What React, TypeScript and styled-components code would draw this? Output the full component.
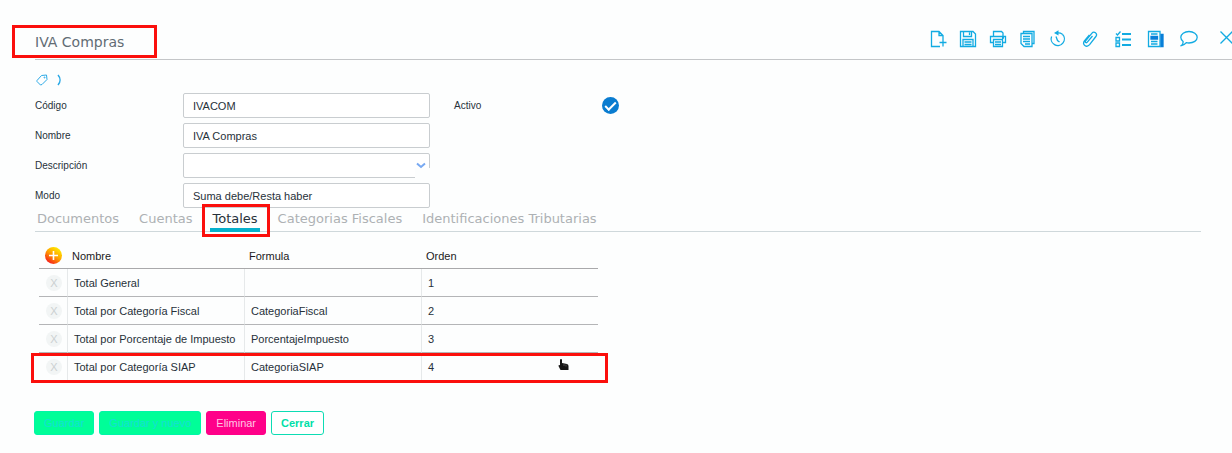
import React, { useState } from "react";
import styled, { createGlobalStyle, css } from "styled-components";

const GlobalStyle = createGlobalStyle`
  *, *::before, *::after { box-sizing: border-box; }
  body {
    margin: 0;
    overflow-x: hidden;
    background: #fdfefe;
    color: #27313a;
    font-family: "Liberation Sans", Arial, sans-serif;
    font-size: 11px;
    line-height: 16px;
  }
  button, input, select { font: inherit; color: inherit; margin: 0; }
  button { cursor: pointer; }
`;

const frame = css`
  position: absolute;
  border: 3px solid #fb0f0c;
  pointer-events: none;
`;

const Header = styled.header`
  display: flex;
  align-items: flex-end;
  justify-content: space-between;
  height: 60px;
  margin-left: 35px;
  border-bottom: 1px solid #c4c6c8;
`;

const Title = styled.h1`
  position: relative;
  margin: 0 0 7px;
  font: 400 14px/20px "DejaVu Sans", sans-serif;
  color: #626c74;
  &::after {
    content: "";
    ${frame}
    inset: -7px -33px -6px -23px;
  }
`;

const Toolbar = styled.nav`
  display: flex;
  align-items: center;
  gap: 14px;
  margin-bottom: 11px;
`;

const ToolGroup = styled.div<{ $gap: number }>`
  display: flex;
  gap: ${(p) => p.$gap}px;
`;

const ToolButton = styled.button`
  display: block;
  padding: 0;
  border: 0;
  background: none;
  color: #12abe2;
  svg { display: block; fill: none; stroke: currentColor; stroke-width: 1.3; }
`;

const CloseButton = styled(ToolButton)`
  margin: 0 0 4px 8px;
`;

const Main = styled.main`
  padding: 0 31px 18px 35px;
`;

const Crumbs = styled.div`
  display: flex;
  align-items: center;
  gap: 9px;
  height: 33px;
  padding: 6px 0 0 1px;
  color: #2aa9e6;
  svg { display: block; fill: none; stroke: currentColor; }
`;

const Form = styled.form`
  display: grid;
  grid-template-columns: minmax(0, 395px) 1fr;
  column-gap: 24px;
`;

const Fields = styled.div`
  display: grid;
  gap: 5px;
  align-content: start;
`;

const Field = styled.div`
  display: grid;
  grid-template-columns: 148px minmax(0, 1fr);
  align-items: center;
  height: 25px;
`;

const Label = styled.label`
  font-size: 10px;
`;

const control = css`
  width: 100%;
  height: 25px;
  padding: 0 9px;
  border: 1px solid #c9cdd0;
  border-radius: 2px;
  background: #fff;
  outline: none;
`;

const TextInput = styled.input`${control}`;

const SelectBox = styled.div`
  position: relative;
`;

const Select = styled.select`
  ${control}
  display: block;
  appearance: none;
`;

const Arrow = styled.span`
  position: absolute;
  right: 0;
  bottom: 0;
  width: 15px;
  height: 10px;
  background: #fdfefe;
  pointer-events: none;
  svg {
    position: absolute;
    left: 1px;
    bottom: 9px;
    fill: none;
    stroke: #78a9f2;
    stroke-width: 2;
  }
`;

const Check = styled.input`
  appearance: none;
  display: grid;
  place-items: center;
  width: 17px;
  height: 17px;
  border-radius: 50%;
  background: #dfe3e6;
  &:checked { background: #0a7cd0; }
  &:checked::after {
    content: "";
    width: 11px;
    height: 6px;
    border: solid #fff;
    border-width: 0 0 2px 2px;
    transform: translateY(-1px) rotate(-45deg);
  }
`;

const Tabs = styled.div`
  display: flex;
  gap: 16px;
  height: 24px;
  border-bottom: 1px solid #cfd8db;
`;

const Tab = styled.button<{ $active: boolean }>`
  height: 24px;
  padding: 0 2px 2px;
  border: 0;
  background: none;
  font: 400 13px/20px "DejaVu Sans", sans-serif;
  color: #adb1b4;
  white-space: nowrap;
  ${(p) => p.$active && css`
    position: relative;
    color: #27313a;
    box-shadow: inset 0 -4px #06b0cc;
    &::after {
      content: "";
      ${frame}
      inset: -4px -10px -5px -8px;
    }
  `}
`;

const TableArea = styled.div`
  position: relative;
  max-width: 559px;
  margin: 11px 0 0 4px;
`;

const Table = styled.table`
  width: 100%;
  border-collapse: separate;
  border-spacing: 0;
  table-layout: fixed;
`;

const HeadCell = styled.th<{ $narrow?: boolean }>`
  width: ${(p) => (p.$narrow ? "28px" : "auto")};
  height: 26px;
  padding: 0 5px;
  border-bottom: 1px solid #a9a9ab;
  font-weight: 400;
  text-align: left;
  color: #1c1a22;
`;

const Row = styled.tr`
  &:last-child > td { border-bottom-color: transparent; }
`;

const Cell = styled.td`
  height: 28px;
  padding: 0 6px;
  border-bottom: 1px solid #b4b5b7;
  & + & { border-left: 1px solid #e6e9ea; }
`;

const RowFrame = styled.div`
  ${frame}
  left: -8px;
  right: -10px;
  bottom: -2px;
  height: 30px;
`;

const AddButton = styled.button`
  display: block;
  width: 17px;
  height: 17px;
  margin-left: 1px;
  padding: 0;
  border: 0;
  border-radius: 50%;
  background: linear-gradient(215deg, #ffe600 15%, #ff9d00 50%, #f5141e 90%);
  svg { display: block; stroke: #fff; stroke-width: 1.6; }
`;

const RemoveButton = styled.button`
  display: block;
  width: 16px;
  height: 16px;
  margin-left: 1px;
  padding: 0;
  border: 0;
  border-radius: 50%;
  background: #f2f5f5;
  color: #cbd0d1;
`;

const Pointer = styled.svg`
  position: absolute;
  right: 29px;
  bottom: 10px;
`;

const Actions = styled.footer`
  display: flex;
  gap: 5px;
  margin: 30px 0 0 -1px;
`;

type Tone = "save" | "danger" | "outline";

const tones = {
  save: css`background: #00fe98; border-color: #00f5a8; color: #14e0d6;`,
  danger: css`background: #ff0089; border-color: #ff0089; color: #ffc4e4;`,
  outline: css`background: #fff; border-color: #0ddcb4; color: #00dfa8; font-weight: 700;`,
};

const ActionButton = styled.button<{ $tone: Tone }>`
  height: 24px;
  padding: 0 9px 1px;
  border: 1px solid;
  border-radius: 3px;
  ${(p) => tones[p.$tone]}
`;

const toolsA = [
  { name: "Nuevo", art: <path d="M11 16.500H2.500v-15h7.500l4 4V10M10 1.500v4h4M10.500 12.500h7M14 9v7.500" /> },
  { name: "Guardar", art: <path d="M1.500 1.500h12.500l2.500 2.500v12.500h-15zM4.500 1.500v5h8v-5M10.500 2.500v2.500M4 16v-6.500h10V16M5.500 12h7M5.500 14.500h7" /> },
  { name: "Imprimir", art: <path d="M4.500 6.500v-5h8l1.500 1.500v3.500M4.500 12.500h-3v-6h15v6h-3M4.500 9.500h9v7h-9zM6 12h6M6 14.500h6M13 8h2" /> },
  { name: "Copiar", art: <path d="M4.500 3.500v-2h10.500v12h-2M2 3.500h11v13H5l-3-3zM4 6.500h7M4 9h7M4 11.500h7M6 14h5" /> },
  { name: "Historial", art: <><path d="M2.600 6.500a6.600 6.600 0 1 0 10.800-2.300M7 6.500l1.500 4 2 1.500" /><path d="M13.400 4.200Q11 2.500 8 3" /><path d="M9.500.3v5.200L5 2.900z" fill="currentColor" stroke="none" /></> },
];

const toolsB = [
  { name: "Adjuntos", art: <path d="M11.500 6l-5.200 6.200c-1 1.200-2.600 0-1.700-1.300l6.200-7.600c2.200-2.700 6.200.4 4.100 3.200L8.600 14.700c-3 3.500-8 0-5.200-3.700l5-6.200" /> },
  { name: "Tareas", art: <><path d="M2 3.500l1.500 1.500L6.500 1.500M2 7.500h3.500V11H2zM2 13h3.500v3.500H2z" /><path d="M8 4h9M8 9.500h9M8 15h9" strokeWidth="1.800" /></> },
  { name: "Noticias", art: <><path d="M1.500 1.500h11.500v15h-11.500zM4 4h6.500M4 11.500h6.500M4 14h6.500" /><path d="M4 6.500h6.500v2.500H4zM14 4.500h2v12h-2z" fill="#087fd8" stroke="#087fd8" /></> },
  { name: "Comentarios", art: <path d="M9 1.500c4.600 0 8.200 2.500 8.200 5.800S13.600 13 9 13c-1 0-1.900-.1-2.700-.3-1.300 1.700-2.800 2.600-4.800 2.800 1.300-1 1.700-2.400 1.600-4C1.700 10.500.8 9 .8 7.300.8 4 4.400 1.500 9 1.500z" /> },
];

const tabNames = ["Documentos", "Cuentas", "Totales", "Categorias Fiscales", "Identificaciones Tributarias"];

const totals = [
  { name: "Total General", formula: "", order: 1 },
  { name: "Total por Categoría Fiscal", formula: "CategoriaFiscal", order: 2 },
  { name: "Total por Porcentaje de Impuesto", formula: "PorcentajeImpuesto", order: 3 },
  { name: "Total por Categoría SIAP", formula: "CategoriaSIAP", order: 4 },
];

const actions: { label: string; tone: Tone }[] = [
  { label: "Guardar", tone: "save" },
  { label: "Guardar y nuevo", tone: "save" },
  { label: "Eliminar", tone: "danger" },
  { label: "Cerrar", tone: "outline" },
];

function Tools({ items, gap }: { items: typeof toolsA; gap: number }) {
  return (
    <ToolGroup $gap={gap}>
      {items.map((t) => (
        <ToolButton key={t.name} type="button" aria-label={t.name}>
          <svg width="18" height="18" viewBox="0 0 18 18">{t.art}</svg>
        </ToolButton>
      ))}
    </ToolGroup>
  );
}

export default function App() {
  const [tab, setTab] = useState("Totales");
  return (
    <>
      <GlobalStyle />
      <Header>
        <Title>IVA Compras</Title>
        <Toolbar aria-label="Herramientas">
          <Tools items={toolsA} gap={12} />
          <Tools items={toolsB} gap={15} />
          <CloseButton type="button" aria-label="Cerrar ventana">
            <svg width="12" height="13" viewBox="0 0 12 13"><path d="M.5.5l12 12M12.500.5l-12 12" /></svg>
          </CloseButton>
        </Toolbar>
      </Header>
      <Main>
        <Crumbs>
          <svg width="12" height="12" viewBox="0 0 12 12"><path d="M1 6.500L5.500 1.500l5-.500.500 4.500L6 10.500l-1.500.5L1 7.500z" /><circle cx="8.500" cy="3.500" r=".5" /></svg>
          <svg width="5" height="12" viewBox="0 0 5 12"><path d="M1 1c2.700 3 2.700 7 0 10" strokeWidth="1.500" /></svg>
        </Crumbs>
        <Form>
          <Fields>
            <Field>
              <Label htmlFor="codigo">Código</Label>
              <TextInput id="codigo" defaultValue="IVACOM" />
            </Field>
            <Field>
              <Label htmlFor="nombre">Nombre</Label>
              <TextInput id="nombre" defaultValue="IVA Compras" />
            </Field>
            <Field>
              <Label htmlFor="descripcion">Descripción</Label>
              <SelectBox>
                <Select id="descripcion"><option value="" /></Select>
                <Arrow><svg width="10" height="7" viewBox="0 0 10 7"><path d="M1 1.500l4 3.500 4-3.500" /></svg></Arrow>
              </SelectBox>
            </Field>
            <Field>
              <Label htmlFor="modo">Modo</Label>
              <TextInput id="modo" defaultValue="Suma debe/Resta haber" />
            </Field>
          </Fields>
          <Fields>
            <Field>
              <Label htmlFor="activo">Activo</Label>
              <Check id="activo" type="checkbox" defaultChecked />
            </Field>
          </Fields>
        </Form>
        <Tabs role="tablist">
          {tabNames.map((name) => (
            <Tab key={name} type="button" role="tab" aria-selected={tab === name} $active={tab === name} onClick={() => setTab(name)}>
              {name}
            </Tab>
          ))}
        </Tabs>
        <TableArea>
          <Table>
            <thead>
              <tr>
                <HeadCell $narrow>
                  <AddButton type="button" aria-label="Agregar">
                    <svg width="17" height="17" viewBox="0 0 17 17"><path d="M4 8.500h9M8.500 4v9" /></svg>
                  </AddButton>
                </HeadCell>
                <HeadCell>Nombre</HeadCell>
                <HeadCell>Formula</HeadCell>
                <HeadCell>Orden</HeadCell>
              </tr>
            </thead>
            <tbody>
              {totals.map((t) => (
                <Row key={t.order}>
                  <Cell><RemoveButton type="button" aria-label={"Quitar " + t.name}>X</RemoveButton></Cell>
                  <Cell>{t.name}</Cell>
                  <Cell>{t.formula}</Cell>
                  <Cell>{t.order}</Cell>
                </Row>
              ))}
            </tbody>
          </Table>
          <RowFrame />
          <Pointer width="11" height="13" viewBox="0 0 11 13">
            <path d="M2 1.500Q3 .3 4 1.500V5l5 1q1.500.3 1.500 2v4h-8L.5 8q0-1.500 1.500-.8z" fill="#151515" />
            <path d="M6 6v2M8 6.500v2" stroke="#777" strokeWidth=".6" />
          </Pointer>
        </TableArea>
        <Actions>
          {actions.map((a) => (
            <ActionButton key={a.label} type="button" $tone={a.tone}>{a.label}</ActionButton>
          ))}
        </Actions>
      </Main>
    </>
  );
}
